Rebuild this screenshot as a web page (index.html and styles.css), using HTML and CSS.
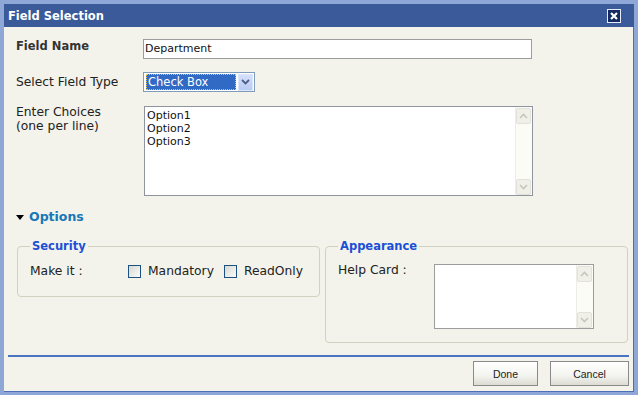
FILE: index.html
```html
<html>
<head>
	<meta charset="UTF-8">
	<title>Field Selection</title>
	<link rel="stylesheet" href="styles.css">
</head>
<body>
	<div class="dialog">
		<div class="title-bar">
			<span class="title">Field Selection</span>
			<span class="close">
				<svg width="12" height="12" viewBox="0 0 12 12"><path d="M3 3 L9 9 M9 3 L3 9" stroke="#fff" stroke-width="2.2"/></svg>
			</span>
		</div>
		<div class="content">
			<div class="row">
				<div class="label bold">Field Name</div>
				<div class="input">Department</div>
			</div>
			<div class="row middle">
				<div class="label">Select Field Type</div>
				<div class="select">
					<span class="sel-text">Check Box</span>
					<span class="sel-btn">
						<svg width="9" height="6" viewBox="0 0 9 6"><path d="M1 1 L4.5 4.5 L8 1" stroke="#4d5f88" stroke-width="1.8" fill="none"/></svg>
					</span>
				</div>
			</div>
			<div class="row">
				<div class="label multi">Enter Choices<br>(one per line)</div>
				<div class="textarea choices">
					<div class="ta-text">Option1<br>Option2<br>Option3</div>
					<div class="scroll">
						<span class="sbtn"><svg width="9" height="6" viewBox="0 0 9 6"><path d="M1 5 L4.5 1.5 L8 5" stroke="#c6c6bc" stroke-width="1.6" fill="none"/></svg></span>
						<span class="sbtn"><svg width="9" height="6" viewBox="0 0 9 6"><path d="M1 1 L4.5 4.5 L8 1" stroke="#c6c6bc" stroke-width="1.6" fill="none"/></svg></span>
					</div>
				</div>
			</div>
			<div class="options"><span class="arrow"></span>Options</div>
			<div class="groups">
				<fieldset class="group security">
					<legend>Security</legend>
					<div class="grow">
						<span class="make">Make it :</span>
						<span class="check"></span><span class="check-label">Mandatory</span>
						<span class="check"></span><span class="check-label">ReadOnly</span>
					</div>
				</fieldset>
				<fieldset class="group appearance">
					<legend>Appearance</legend>
					<div class="grow top">
						<span class="help">Help Card :</span>
						<div class="textarea help-box">
							<div class="ta-text"></div>
							<div class="scroll">
								<span class="sbtn"><svg width="9" height="6" viewBox="0 0 9 6"><path d="M1 5 L4.5 1.5 L8 5" stroke="#c6c6bc" stroke-width="1.6" fill="none"/></svg></span>
								<span class="sbtn"><svg width="9" height="6" viewBox="0 0 9 6"><path d="M1 1 L4.5 4.5 L8 1" stroke="#c6c6bc" stroke-width="1.6" fill="none"/></svg></span>
							</div>
						</div>
					</div>
				</fieldset>
			</div>
		</div>
		<div class="footer">
			<button class="btn done">Done</button>
			<button class="btn cancel">Cancel</button>
		</div>
	</div>
</body>
</html>
```
FILE: styles.css
```css
* {
	margin: 0;
	padding: 0;
	box-sizing: border-box;
}
body {
	background: #8fa7d7;
	padding: 4px;
	font-family: "DejaVu Sans", Verdana, sans-serif;
	font-size: 11px;
	color: #111;
}
.dialog {
	width: 630px;
	height: 388px;
	background: #f3f3eb;
	border-right: 1px solid #4d6fb6;
	border-bottom: 1px solid #4d6fb6;
	display: flex;
	flex-direction: column;
}
.title-bar {
	height: 23px;
	margin-right: -1px;
	background: #3a5a9a;
	display: flex;
	align-items: center;
	justify-content: space-between;
	padding: 0 13px 0 4px;
}
.title {
	color: #fff;
	font-weight: bold;
	font-size: 11.5px;
}
.close {
	width: 14px;
	height: 14px;
	background: #142a62;
	border: 1px solid #e8ecf6;
	display: flex;
	align-items: center;
	justify-content: center;
}
.content {
	flex: 1;
	padding: 12px 0 0 12px;
}
.row {
	display: flex;
	align-items: flex-start;
	margin-bottom: 13px;
}
.row.middle {
	align-items: center;
	margin-bottom: 14px;
}
.label {
	width: 127px;
	line-height: 14px;
	font-size: 12.3px;
	color: #222;
}
.label.bold {
	font-weight: bold;
	font-size: 11.5px;
	color: #333;
}
.label.multi {
	margin-top: -1px;
}
.input {
	width: 389px;
	height: 20px;
	background: #fff;
	border: 1px solid #9c9c9c;
	padding: 0 0 0 1px;
	line-height: 18px;
	font-size: 11px;
}
.select {
	width: 112px;
	height: 20px;
	background: #fff;
	border: 1px solid #7f9db9;
	display: flex;
	align-items: center;
	padding: 1px 1px 1px 2px;
}
.sel-text {
	width: 91px;
	height: 16px;
	background: #316ac5;
	color: #fff;
	border: 1px dotted #e2c05a;
	line-height: 14px;
	padding-left: 1px;
	font-size: 11.5px;
}
.sel-btn {
	width: 15px;
	height: 17px;
	margin-left: 2px;
	background: linear-gradient(#d4e0fb, #b8cbf3);
	border: 1px solid #dbe5fb;
	display: flex;
	align-items: center;
	justify-content: center;
}
.textarea {
	background: #fff;
	border: 1px solid #8e959e;
	display: flex;
}
.choices {
	width: 389px;
	height: 90px;
	margin-left: 1px;
}
.ta-text {
	flex: 1;
	padding: 2px 2px;
	line-height: 13px;
	font-size: 11px;
}
.scroll {
	width: 17px;
	background: #fcfcf7;
	border-left: 1px solid #eeede5;
	display: flex;
	flex-direction: column;
	justify-content: space-between;
	padding: 1px 1px 0 0;
}
.sbtn {
	height: 16px;
	background: #f0efe8;
	border: 1px solid #e3e2da;
	border-radius: 2px;
	display: flex;
	align-items: center;
	justify-content: center;
}
.options {
	margin-top: 14px;
	line-height: 14px;
	font-weight: bold;
	font-size: 12.5px;
	color: #1877b7;
	display: flex;
	align-items: center;
}
.arrow {
	width: 0;
	height: 0;
	border-left: 4px solid transparent;
	border-right: 4px solid transparent;
	border-top: 5px solid #000;
	margin-right: 5px;
}
.groups {
	display: flex;
	align-items: flex-start;
	gap: 5px;
	margin: 15px 0 0 1px;
}
.group {
	width: 303px;
	min-width: 0;
	flex: none;
	border: 1px solid #d1d1bf;
	border-radius: 4px;
	padding: 11px 12px 18px;
}
.appearance {
	padding-bottom: 13px;
}
legend {
	padding: 0 2px;
	line-height: 14px;
	font-weight: bold;
	font-size: 11.5px;
	color: #1a4fd6;
}
.grow {
	display: flex;
	align-items: center;
	line-height: 14px;
	font-size: 12.3px;
	color: #222;
	white-space: nowrap;
}
.grow.top {
	align-items: flex-start;
}
.make {
	width: 98px;
	flex: none;
}
.check {
	width: 13px;
	height: 13px;
	flex: none;
	border: 1px solid #1c5180;
	background: linear-gradient(135deg, #d8d8d2, #fbfbf9);
	margin-right: 7px;
}
.check-label {
	margin-right: 10px;
}
.check-label:last-child {
	margin-right: 0;
}
.help {
	width: 96px;
	margin-top: -1px;
}
.help-box {
	width: 160px;
	height: 65px;
	border-color: #9c9c9c;
}
.footer {
	margin: 0 4px 5px;
	border-top: 2px solid #4a74c2;
	padding-top: 4px;
	display: flex;
	justify-content: flex-end;
	gap: 12px;
}
.btn {
	height: 25px;
	border: 1px solid #8a8a8a;
	background: linear-gradient(#ffffff, #f3f3ef 60%, #dcdcd4);
	font-family: "Liberation Sans", Tahoma, sans-serif;
	font-size: 10.5px;
	color: #222;
}
.done {
	width: 65px;
}
.cancel {
	width: 79px;
}
```
